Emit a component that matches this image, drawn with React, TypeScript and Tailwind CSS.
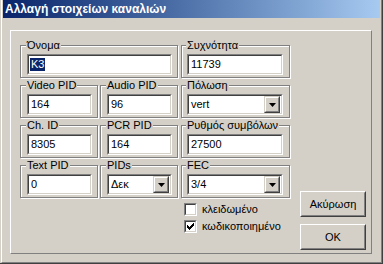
import React from "react";

function Sunken({ className = "", children }: { className?: string; children?: React.ReactNode }) {
  return (
    <div className={`border border-t-[#808080] border-l-[#808080] border-r-white border-b-white ${className}`}>
      <div className="h-full border border-t-[#404040] border-l-[#404040] border-r-[#d4d0c8] border-b-[#d4d0c8] bg-white flex items-center">
        {children}
      </div>
    </div>
  );
}

function Group({ label, className = "", children }: { label: string; className?: string; children?: React.ReactNode }) {
  return (
    <div className={`border border-[#808080] shadow-[1px_1px_0_#fff,inset_1px_1px_0_#fff] pb-[2px] ${className}`}>
      <div className="-mt-[7px] -ml-px h-[13px] leading-[13px] px-px bg-[#d4d0c8] w-fit whitespace-nowrap">{label}</div>
      <div className="mt-[2px]">{children}</div>
    </div>
  );
}

function TextField({ value, className = "", selected = false }: { value: string; className?: string; selected?: boolean }) {
  return (
    <Sunken className={`h-[21px] ${className}`}>
      <span className={`ml-px px-px leading-[13px] ${selected ? "bg-[#0a246a] text-white" : ""}`}>{value}</span>
    </Sunken>
  );
}

function Select({ value, className = "" }: { value: string; className?: string }) {
  return (
    <Sunken className={`h-[21px] ${className}`}>
      <span className="ml-px px-px leading-[13px] flex-1">{value}</span>
      <div className="h-[17px] w-[16px] mr-px border border-t-[#d4d0c8] border-l-[#d4d0c8] border-r-[#404040] border-b-[#404040]">
        <div className="h-full border border-t-white border-l-white border-r-[#808080] border-b-[#808080] bg-[#d4d0c8] flex items-center justify-center">
          <svg width="7" height="4" viewBox="0 0 7 4" className="block">
            <polygon points="0,0 7,0 3.5,4" fill="#000" />
          </svg>
        </div>
      </div>
    </Sunken>
  );
}

function Checkbox({ checked, label }: { checked?: boolean; label: string }) {
  return (
    <div className="flex items-center h-[13px]">
      <Sunken className="w-[13px] h-[13px]">
        {checked && (
          <svg width="7" height="7" viewBox="0 0 7 7" className="block ml-px">
            <path d="M0 2h1v1h1v1h1V3h1V2h1V1h1V0h1v3H6v1H5v1H4v1H3v1H2V6H1V5H0z" fill="#000" />
          </svg>
        )}
      </Sunken>
      <span className="ml-[5px] leading-[13px]">{label}</span>
    </div>
  );
}

function Button({ label }: { label: string }) {
  return (
    <div className="w-[66px] h-[26px] border border-t-white border-l-white border-r-[#404040] border-b-[#404040]">
      <div className="h-full border border-t-[#d4d0c8] border-l-[#d4d0c8] border-r-[#808080] border-b-[#808080] flex items-center justify-center">
        {label}
      </div>
    </div>
  );
}

export default function App() {
  return (
    <div className="w-[383px] h-[264px] bg-[#d4d0c8] border-r border-b border-[#404040] font-['Liberation_Sans',sans-serif] text-[11px] text-black overflow-hidden">
      <div className="h-full ml-px border-l border-l-white border-r border-b border-r-[#808080] border-b-[#808080] px-px">
        <div className="h-[18px] bg-gradient-to-r from-[#0a246a] to-[#a6caf0] flex items-center pl-[2px]">
          <span className="text-white font-bold text-[12px] leading-[14px]">Αλλαγή στοιχείων καναλιών</span>
        </div>
        <div className="mt-[12px] ml-[7px] w-[362px] h-[224px] border border-t-white border-l-white border-r-[#808080] border-b-[#808080] flex">
          <div className="pl-[9px] pt-[14px] flex flex-col">
            <div className="flex flex-col gap-[7px]">
              <div className="flex">
                <Group label="Όνομα" className="w-[158px] pl-[6px]">
                  <TextField value="K3" selected className="w-[145px]" />
                </Group>
                <Group label="Συχνότητα" className="w-[109px] ml-[3px] pl-[5px]">
                  <TextField value="11739" className="w-[96px]" />
                </Group>
              </div>
              <div className="flex">
                <Group label="Video PID" className="w-[78px] pl-[6px]">
                  <TextField value="164" className="w-[65px]" />
                </Group>
                <Group label="Audio PID" className="w-[78px] ml-[2px] pl-[6px]">
                  <TextField value="96" className="w-[65px]" />
                </Group>
                <Group label="Πόλωση" className="w-[109px] ml-[3px] pl-[5px]">
                  <Select value="vert" className="w-[96px]" />
                </Group>
              </div>
              <div className="flex">
                <Group label="Ch. ID" className="w-[78px] pl-[6px]">
                  <TextField value="8305" className="w-[65px]" />
                </Group>
                <Group label="PCR PID" className="w-[78px] ml-[2px] pl-[6px]">
                  <TextField value="164" className="w-[65px]" />
                </Group>
                <Group label="Ρυθμός συμβόλων" className="w-[109px] ml-[3px] pl-[5px]">
                  <TextField value="27500" className="w-[96px]" />
                </Group>
              </div>
              <div className="flex">
                <Group label="Text PID" className="w-[78px] pl-[6px]">
                  <TextField value="0" className="w-[65px]" />
                </Group>
                <Group label="PIDs" className="w-[78px] ml-[2px] pl-[6px]">
                  <Select value="Δεκ" className="w-[65px]" />
                </Group>
                <Group label="FEC" className="w-[109px] ml-[3px] pl-[5px]">
                  <Select value="3/4" className="w-[96px]" />
                </Group>
              </div>
            </div>
            <div className="ml-[164px] mt-[5px] flex flex-col gap-[4px]">
              <Checkbox label="κλειδωμένο" />
              <Checkbox checked label="κωδικοποιημένο" />
            </div>
          </div>
          <div className="ml-auto mr-[5px] pb-[3px] flex flex-col justify-end gap-[7px]">
            <Button label="Ακύρωση" />
            <Button label="OK" />
          </div>
        </div>
      </div>
    </div>
  );
}
